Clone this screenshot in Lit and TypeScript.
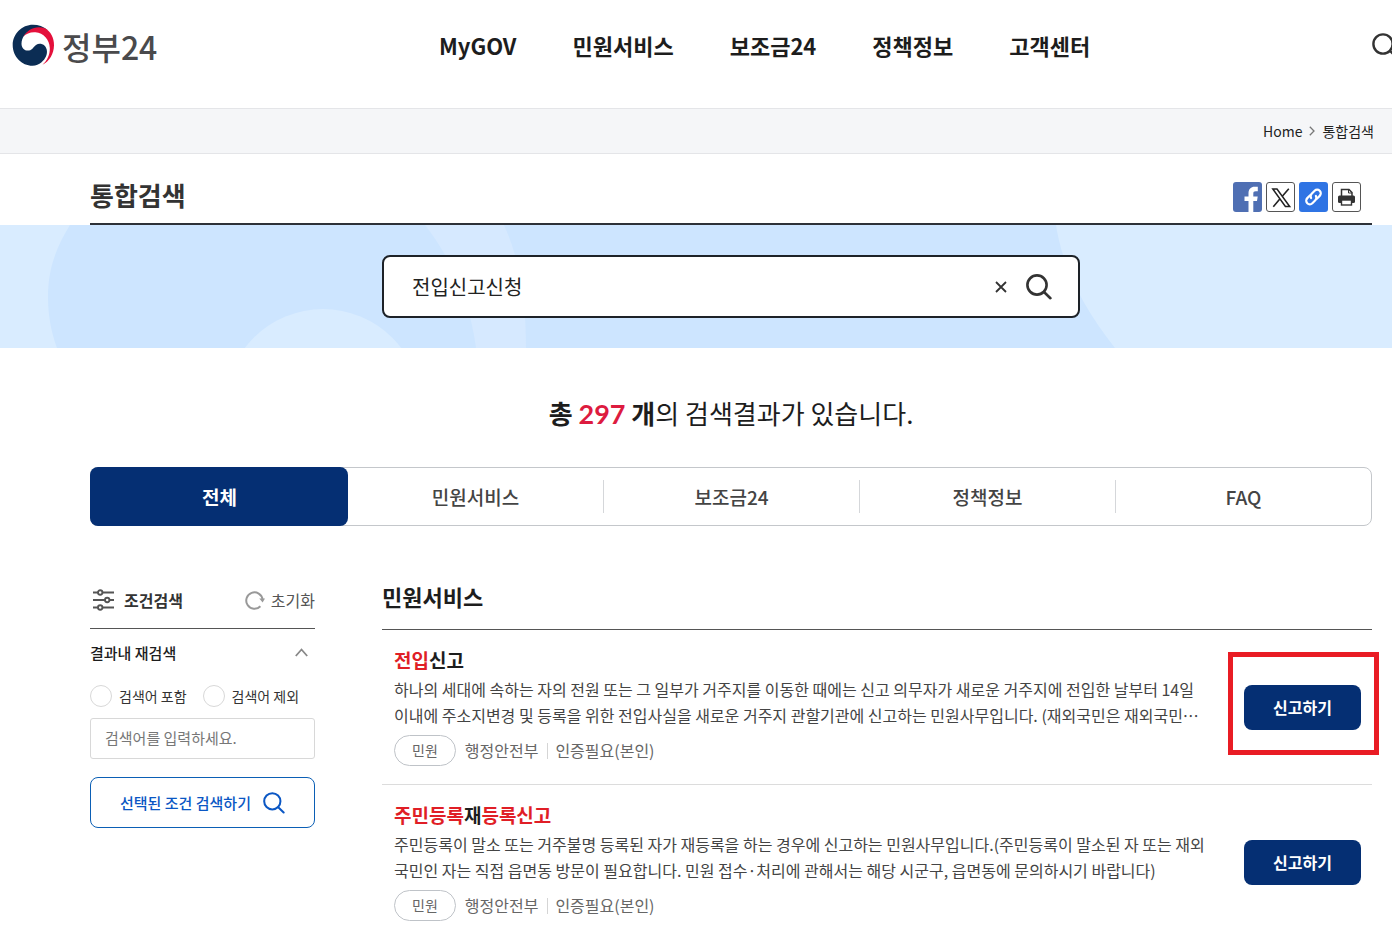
import { LitElement, html, css, svg } from "lit";
import { customElement, property, state } from "lit/decorators.js";
import { classMap } from "lit/directives/class-map.js";

interface Piece {
  text: string;
  hit?: boolean;
}

interface Service {
  title: Piece[];
  description: string;
  kind: string;
  agency: string;
  auth: string;
  marked?: boolean;
}

const NAV = ["MyGOV", "민원서비스", "보조금24", "정책정보", "고객센터"];
const TABS = ["전체", "민원서비스", "보조금24", "정책정보", "FAQ"];

const SERVICES: Service[] = [
  {
    title: [{ text: "전입", hit: true }, { text: "신고" }],
    description:
      "하나의 세대에 속하는 자의 전원 또는 그 일부가 거주지를 이동한 때에는 신고 의무자가 새로운 거주지에 전입한 날부터 14일 이내에 주소지변경 및 등록을 위한 전입사실을 새로운 거주지 관할기관에 신고하는 민원사무입니다. (재외국민은 재외국민…",
    kind: "민원",
    agency: "행정안전부",
    auth: "인증필요(본인)",
    marked: true,
  },
  {
    title: [{ text: "주민등록", hit: true }, { text: "재" }, { text: "등록신고", hit: true }],
    description:
      "주민등록이 말소 또는 거주불명 등록된 자가 재등록을 하는 경우에 신고하는 민원사무입니다.(주민등록이 말소된 자 또는 재외국민인 자는 직접 읍면동 방문이 필요합니다. 민원 접수·처리에 관해서는 해당 시군구, 읍면동에 문의하시기 바랍니다)",
    kind: "민원",
    agency: "행정안전부",
    auth: "인증필요(본인)",
  },
];

const magnifier = (size: number, width: number) => html`
  <svg width=${size} height=${size} viewBox="0 0 26 26" fill="none" stroke="currentColor" stroke-width=${width} stroke-linecap="round" aria-hidden="true">
    <circle cx="11" cy="11" r="9.6"></circle>
    <path d="M18 18l6.4 6.2"></path>
  </svg>
`;

const sharedText = css`
  button,
  input {
    font-family: inherit;
    margin: 0;
  }
  button {
    cursor: pointer;
  }
  a {
    color: inherit;
    text-decoration: none;
  }
  svg {
    display: block;
  }
`;

@customElement("service-item")
export class ServiceItem extends LitElement {
  @property({ attribute: false }) service!: Service;

  static styles = [
    sharedText,
    css`
      :host {
        display: block;
      }
      .item {
        display: flex;
        align-items: center;
        gap: 36px;
        padding: 16px 11px 18px 12px;
      }
      .text {
        flex: 1;
        min-width: 0;
      }
      .title {
        margin: 0 0 2px;
        font-size: 19px;
        line-height: 28px;
        font-weight: 700;
        color: #1d1d1d;
      }
      .hit {
        color: #e01e26;
      }
      .description {
        margin: 0;
        font-size: 16px;
        line-height: 26px;
        color: #444;
      }
      .meta {
        display: flex;
        align-items: center;
        margin-top: 7px;
        font-size: 16px;
        line-height: 29px;
        color: #666;
      }
      .kind {
        padding: 0 17px;
        margin-right: 9px;
        border: 1px solid #bfc3c8;
        border-radius: 16px;
        font-size: 14px;
      }
      .auth {
        display: flex;
        align-items: center;
      }
      .auth::before {
        content: "";
        width: 1px;
        height: 16px;
        margin: 0 7px 0 9px;
        background: #d5d5d5;
      }
      .action {
        position: relative;
        flex: none;
        padding-top: 2px;
      }
      .apply {
        display: block;
        width: 117px;
        height: 45px;
        padding: 0;
        border: 0;
        border-radius: 8px;
        background: #052f73;
        color: #fff;
        font-size: 16px;
        font-weight: 700;
      }
      .marked::after {
        content: "";
        position: absolute;
        inset: -31px -18px -25px -16px;
        border: 5px solid #e91c24;
        pointer-events: none;
      }
    `,
  ];

  render() {
    const s = this.service;
    return html`
      <article class="item">
        <div class="text">
          <h3 class="title">${s.title.map((p) => html`<span class=${classMap({ hit: !!p.hit })}>${p.text}</span>`)}</h3>
          <p class="description">${s.description}</p>
          <div class="meta">
            <span class="kind">${s.kind}</span>
            <span>${s.agency}</span>
            <span class="auth">${s.auth}</span>
          </div>
        </div>
        <div class=${classMap({ action: true, marked: !!s.marked })}>
          <button class="apply" type="button">신고하기</button>
        </div>
      </article>
    `;
  }
}

@customElement("filter-panel")
export class FilterPanel extends LitElement {
  static styles = [
    sharedText,
    css`
      :host {
        display: block;
      }
      .head {
        display: flex;
        align-items: center;
        justify-content: space-between;
        box-sizing: border-box;
        height: 55px;
        padding-bottom: 2px;
        border-bottom: 1px solid #555;
      }
      .heading {
        display: flex;
        align-items: center;
        gap: 9px;
        margin: 0;
        padding-left: 2px;
        font-size: 16px;
        font-weight: 700;
        color: #333;
      }
      .reset {
        display: flex;
        align-items: center;
        gap: 6px;
        padding: 0;
        border: 0;
        background: none;
        font-size: 16px;
        color: #555;
      }
      .reset svg {
        color: #999;
      }
      .toggle {
        display: flex;
        align-items: center;
        justify-content: space-between;
        width: 100%;
        height: 48px;
        padding: 0 7px 2px 0;
        border: 0;
        background: none;
        font-size: 15px;
        font-weight: 500;
        color: #1d1d1d;
      }
      .choices {
        display: flex;
        gap: 16px;
        margin-top: 8px;
      }
      .choice {
        display: flex;
        align-items: center;
        gap: 7px;
        font-size: 14px;
        line-height: 22px;
        color: #333;
        white-space: nowrap;
      }
      .radio {
        appearance: none;
        flex: none;
        width: 22px;
        height: 22px;
        border: 1px solid #d8d8d8;
        border-radius: 50%;
        background: #fff;
      }
      .radio:checked {
        border: 7px solid #052f73;
      }
      .keyword {
        display: block;
        box-sizing: border-box;
        width: 100%;
        height: 41px;
        margin-top: 11px;
        padding: 0 14px 2px;
        border: 1px solid #d8d8d8;
        border-radius: 3px;
        font-size: 15px;
        color: #333;
      }
      .keyword::placeholder {
        color: #777;
      }
      .submit {
        display: flex;
        align-items: center;
        justify-content: center;
        gap: 12px;
        box-sizing: border-box;
        width: 100%;
        height: 51px;
        margin-top: 18px;
        padding: 0;
        border: 1px solid #0b5fb5;
        border-radius: 8px;
        background: #fff;
        color: #0b57c4;
        font-size: 15px;
        font-weight: 500;
      }
    `,
  ];

  render() {
    return html`
      <div class="head">
        <h2 class="heading">
          <svg width="23" height="22" viewBox="0 0 23 22" fill="none" stroke="#555" stroke-width="1.9" aria-hidden="true">
            <path d="M1 3.500h5M10.500 3.500H22M1 11h12M17.500 11H22M1 18.500h5M10.500 18.500H22"></path>
            <circle cx="8.200" cy="3.500" r="2.200"></circle>
            <circle cx="15.200" cy="11" r="2.200"></circle>
            <circle cx="8.200" cy="18.500" r="2.200"></circle>
          </svg>
          조건검색
        </h2>
        <button class="reset" type="button">
          <svg width="20" height="20" viewBox="0 0 20 20" fill="none" aria-hidden="true">
            <path d="M15.400 16.200A8.200 8.200 0 1 1 17.600 9.500" stroke="currentColor" stroke-width="2"></path>
            <path d="M14.300 8.500h5.700l-2.400 4z" fill="currentColor"></path>
          </svg>
          초기화
        </button>
      </div>
      <button class="toggle" type="button" aria-expanded="true">
        결과내 재검색
        <svg width="13" height="9" viewBox="0 0 13 9" fill="none" stroke="#888" stroke-width="1.800" aria-hidden="true">
          <path d="M0.800 8L6.500 1.500 12.200 8"></path>
        </svg>
      </button>
      <div class="choices">
        <label class="choice"><input class="radio" type="radio" name="scope" value="in" />검색어 포함</label>
        <label class="choice"><input class="radio" type="radio" name="scope" value="out" />검색어 제외</label>
      </div>
      <input class="keyword" type="text" aria-label="결과내 재검색어" placeholder="검색어를 입력하세요." />
      <button class="submit" type="button">선택된 조건 검색하기 ${magnifier(22, 2.4)}</button>
    `;
  }
}

@customElement("app-root")
export class AppRoot extends LitElement {
  @state() private tab = 0;
  @state() private query = "전입신고신청";

  static styles = [
    sharedText,
    css`
      :host {
        display: block;
        min-height: 100vh;
        overflow-x: hidden;
        background: #fff;
        color: #1d1d1d;
        font-family: "Noto Sans CJK KR", "Noto Sans", sans-serif;
      }
      .header {
        display: flex;
        align-items: center;
        height: 108px;
        padding: 0 0 16px 12px;
        box-sizing: border-box;
        overflow: hidden;
      }
      .logo {
        display: flex;
        align-items: center;
        gap: 7px;
        width: 427px;
        padding-bottom: 1px;
        font-size: 32px;
        line-height: 40px;
        font-weight: 500;
        color: #4a4a4c;
      }
      .nav {
        display: flex;
        gap: 56px;
        padding-bottom: 2px;
        font-size: 22px;
        line-height: 32px;
        font-weight: 700;
        white-space: nowrap;
      }
      .find {
        flex: none;
        margin: 0 -6px 0 auto;
        padding: 0;
        border: 0;
        background: none;
        color: #333;
      }
      .crumbs {
        display: flex;
        align-items: center;
        justify-content: flex-end;
        gap: 7px;
        height: 44px;
        padding-right: 18px;
        border: 1px solid #e4e5e8;
        border-width: 1px 0;
        background: #f5f6f8;
        font-size: 14px;
        color: #222;
      }
      .wrap {
        margin: 0 20px 0 90px;
      }
      .titlebar {
        display: flex;
        align-items: center;
        justify-content: space-between;
        box-sizing: border-box;
        height: 71px;
        padding: 16px 11px 0 0;
        border-bottom: 2px solid #2d3138;
      }
      .page-title {
        margin: 0;
        padding-bottom: 4px;
        font-size: 26px;
        line-height: 36px;
        font-weight: 700;
        color: #333;
      }
      .share {
        display: flex;
        gap: 4px;
      }
      .share-button {
        padding: 0;
        border: 0;
        background: none;
      }
      .banner {
        position: relative;
        height: 123px;
        overflow: hidden;
        background: #d9ecff;
      }
      .waves {
        position: absolute;
        inset: 0;
        width: 100%;
        height: 100%;
      }
      .search {
        position: relative;
        display: flex;
        align-items: center;
        box-sizing: border-box;
        max-width: 698px;
        height: 63px;
        margin: 30px auto 0;
        padding: 0 26px 0 28px;
        border: 2px solid #1d2228;
        border-radius: 8px;
        background: #fff;
      }
      .query {
        flex: 1;
        min-width: 0;
        padding: 0;
        border: 0;
        outline: 0;
        background: none;
        font-size: 20px;
        color: #222;
      }
      .icon-button {
        padding: 0;
        border: 0;
        background: none;
        color: #333;
      }
      .clear {
        margin-right: 19px;
      }
      .summary {
        margin: 45px 0 0;
        font-size: 26px;
        line-height: 40px;
        text-align: center;
      }
      .count {
        font-family: Lato, "Noto Sans CJK KR", sans-serif;
        font-size: 27px;
        color: #dd1b3f;
      }
      .tabs {
        display: grid;
        grid-template-columns: repeat(5, 1fr);
        height: 57px;
        margin-top: 33px;
        border: 1px solid #c4c7cb;
        border-radius: 8px;
      }
      .tab {
        display: flex;
        align-items: center;
        justify-content: center;
        padding: 0;
        border: 0;
        background: none;
        font-size: 19px;
        font-weight: 500;
        color: #444;
      }
      .tab-label {
        flex: 1;
        line-height: 33px;
        border-left: 1px solid #d5d7da;
      }
      .active {
        margin: -1px;
        border-radius: 8px;
        background: #052f73;
        color: #fff;
        font-weight: 700;
      }
      .active .tab-label,
      .active + .tab .tab-label,
      .tab:first-child .tab-label {
        border-left-color: transparent;
      }
      .columns {
        display: grid;
        grid-template-columns: 225px minmax(0, 1fr);
        gap: 67px;
        margin-top: 48px;
      }
      .section-title {
        margin: 0;
        padding-bottom: 10px;
        font-size: 22px;
        line-height: 45px;
        font-weight: 700;
        border-bottom: 1px solid #555;
      }
      .list {
        margin: 0;
        padding: 0;
        list-style: none;
      }
      .row + .row {
        border-top: 1px solid #dcdcdc;
      }
    `,
  ];

  private clear() {
    this.query = "";
  }

  private logo() {
    return html`
      <svg width="43" height="43" viewBox="0 0 43 43" aria-hidden="true">
        <path d="M35.500 6C31.500 2.700 26.500 0.800 21 0.800 9.800 0.800 0.700 9.900 0.700 21.200S9.800 41.700 20.500 41.700c3.600 0 6.500-1.200 8.800-3.200C33.500 35 35.800 30 34.700 25.500 33.500 20.500 28 18.300 24 21c-2.500 1.700-3.200 4.800-7 5.500-4 0.700-7.500-2.300-7.500-6.800 0-2.900 1.100-5.700 2.700-8.100C16 6 26 1.500 35.500 6z" fill="#0b2d54"></path>
        <path d="M11.300 12.800C15.500 5 24.500 1 33 4.300 38.700 7.500 42.200 14 42 21.200 41.800 30 37.500 37 30.500 40.800 35.500 36.200 38 30.500 37.800 24 37.500 15.500 31.500 9 23.500 8.300 18.500 7.900 14.300 9.600 11.300 12.800z" fill="#e4103b"></path>
      </svg>
    `;
  }

  private shareButtons() {
    const buttons = [
      {
        label: "페이스북",
        art: svg`<rect width="29" height="30" rx="3" fill="#4f6fb3"/><path d="M15.500 30V19h-4v-4.500h4v-3.200C15.500 7 18 4.800 21.500 4.800h3.300V9.300h-2.100c-1.800 0-2.400 0.800-2.400 2.400v2.800h4.400L24 19h-3.700V30z" fill="#fff"/>`,
      },
      {
        label: "X",
        art: svg`<rect x="0.500" y="0.500" width="28" height="29" rx="2.500" fill="#fff" stroke="#555"/><g fill="none" stroke="#222"><path d="M6.800 7h4.200L23.700 24.500h-4.300z" stroke-width="1.500"/><path d="M22.800 6.800L16.300 14.300M13.800 17L7.300 24.800" stroke-width="1.600"/></g>`,
      },
      {
        label: "링크 복사",
        art: svg`<rect width="29" height="30" rx="3" fill="#2f74e4"/><g fill="none" stroke="#fff" stroke-width="2.200" stroke-linecap="round" transform="translate(14.500 15) rotate(-45)"><path d="M-1.500 -3.600H-5.200a3.600 3.600 0 0 0 0 7.200H-1a3.600 3.600 0 0 0 3.400-2.600"/><path d="M1.500 3.600H5.200a3.600 3.600 0 0 0 0-7.200H1a3.600 3.600 0 0 0-3.400 2.600"/></g>`,
      },
      {
        label: "인쇄",
        art: svg`<rect x="0.500" y="0.500" width="28" height="29" rx="2.500" fill="#fff" stroke="#555"/><path d="M9.500 14V7.500h7.500l3 3V14" fill="none" stroke="#333" stroke-width="1.500"/><path d="M16.500 7.500v3.500h3.500" fill="none" stroke="#333"/><rect x="6" y="13.500" width="17" height="7.500" rx="1.500" fill="#333"/><rect x="9.500" y="18" width="10" height="5" fill="#fff" stroke="#333" stroke-width="1.400"/>`,
      },
    ];
    return buttons.map(
      (b) => html`
        <button class="share-button" type="button" aria-label=${b.label}>
          <svg width="29" height="30" viewBox="0 0 29 30" aria-hidden="true">${b.art}</svg>
        </button>
      `
    );
  }

  render() {
    return html`
      <header class="header">
        <a class="logo" href="#">${this.logo()}정부24</a>
        <nav class="nav">${NAV.map((n) => html`<a href="#">${n}</a>`)}</nav>
        <button class="find" type="button" aria-label="검색 열기">${magnifier(26, 2.4)}</button>
      </header>
      <nav class="crumbs" aria-label="현재 위치">
        <a href="#">Home</a>
        <svg width="6" height="10" viewBox="0 0 6 10" fill="none" stroke="#777" stroke-width="1.300" aria-hidden="true">
          <path d="M0.800 0.800L5 5 0.800 9.200"></path>
        </svg>
        <span>통합검색</span>
      </nav>
      <div class="wrap titlebar">
        <h1 class="page-title">통합검색</h1>
        <div class="share">${this.shareButtons()}</div>
      </div>
      <section class="banner">
        <svg class="waves" viewBox="0 0 1392 123" preserveAspectRatio="xMidYMid slice" aria-hidden="true">
          <path d="M70 0C54 25 48 48 48 72c0 18 3 35 9 51H1115C1085 85 1063 45 1056 0z" fill="#cde5ff"></path>
          <path d="M425 0C450 32 470 75 476 123h50C526 75 520 35 504 0z" fill="#d6e9ff"></path>
          <circle cx="323" cy="182" r="98" fill="#d9ecff"></circle>
        </svg>
        <div class="wrap">
          <form class="search" role="search" @submit=${(e: Event) => e.preventDefault()}>
            <input
              class="query"
              type="text"
              aria-label="검색어"
              .value=${this.query}
              @input=${(e: Event) => (this.query = (e.target as HTMLInputElement).value)}
            />
            <button class="icon-button clear" type="button" aria-label="지우기" @click=${this.clear}>
              <svg width="12" height="12" viewBox="0 0 12 12" stroke="currentColor" stroke-width="1.800" aria-hidden="true">
                <path d="M1 1l10 10M11 1L1 11"></path>
              </svg>
            </button>
            <button class="icon-button" type="submit" aria-label="검색">${magnifier(26, 2.6)}</button>
          </form>
        </div>
      </section>
      <main class="wrap">
        <p class="summary"><strong>총 <span class="count">297</span> 개</strong>의 검색결과가 있습니다.</p>
        <div class="tabs" role="tablist">
          ${TABS.map(
            (t, i) => html`
              <button
                class=${classMap({ tab: true, active: i === this.tab })}
                type="button"
                role="tab"
                aria-selected=${i === this.tab ? "true" : "false"}
                @click=${() => (this.tab = i)}
              >
                <span class="tab-label">${t}</span>
              </button>
            `
          )}
        </div>
        <div class="columns">
          <filter-panel></filter-panel>
          <section>
            <h2 class="section-title">민원서비스</h2>
            <ul class="list">
              ${SERVICES.map((s) => html`<li class="row"><service-item .service=${s}></service-item></li>`)}
            </ul>
          </section>
        </div>
      </main>
    `;
  }
}
